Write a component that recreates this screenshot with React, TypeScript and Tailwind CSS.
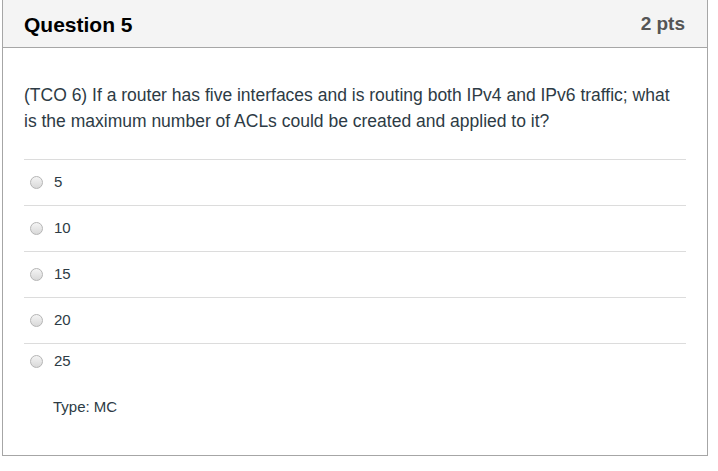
const options = ["5", "10", "15", "20"];

const Radio = () => (
  <span className="inline-block w-[13px] h-[13px] rounded-full border border-[#b5b5b5] bg-gradient-to-b from-[#f4f4f4] to-[#d9d9d9] shrink-0" />
);

export default function App() {
  return (
    <div className="w-[718px] h-[471px] bg-white font-['Liberation_Sans',Arial,sans-serif]">
      <div className="ml-[2px] w-[706px] border-x border-b border-[#a6a6a6] bg-white">
        {/* header */}
        <div className="h-[48px] bg-[#f4f4f4] border-b border-[#a6a6a6] flex items-center justify-between pl-[21px] pr-[22px] pt-[2px]">
          <h2 className="text-[21px] font-bold text-black">Question 5</h2>
          <span className="text-[19px] font-bold text-[#555]">2 pts</span>
        </div>

        {/* body */}
        <div className="pl-[21px] pr-[21px] pt-[34px] pb-[38px]">
          <p className="text-[17.5px] leading-[26px] text-[#2d3b45]">
            (TCO 6) If a router has five interfaces and is routing both IPv4 and IPv6 traffic; what is the maximum number of ACLs could be created and applied to it?
          </p>

          <div className="mt-[25px]">
            {options.map((opt) => (
              <div key={opt} className="h-[46px] border-t border-[#dcdcdc] flex items-center pl-[6px]">
                <Radio />
                <span className="ml-[11px] text-[15px] text-[#2d3b45]">{opt}</span>
              </div>
            ))}
            <div className="h-[36px] border-t border-[#dcdcdc] flex items-center pl-[6px]">
              <Radio />
              <span className="ml-[11px] text-[15px] text-[#2d3b45]">25</span>
            </div>
          </div>

          <div className="mt-[18px] pl-[29px] text-[15px] leading-[20px] text-[#2d3b45]">Type: MC</div>
        </div>
      </div>
    </div>
  );
}
